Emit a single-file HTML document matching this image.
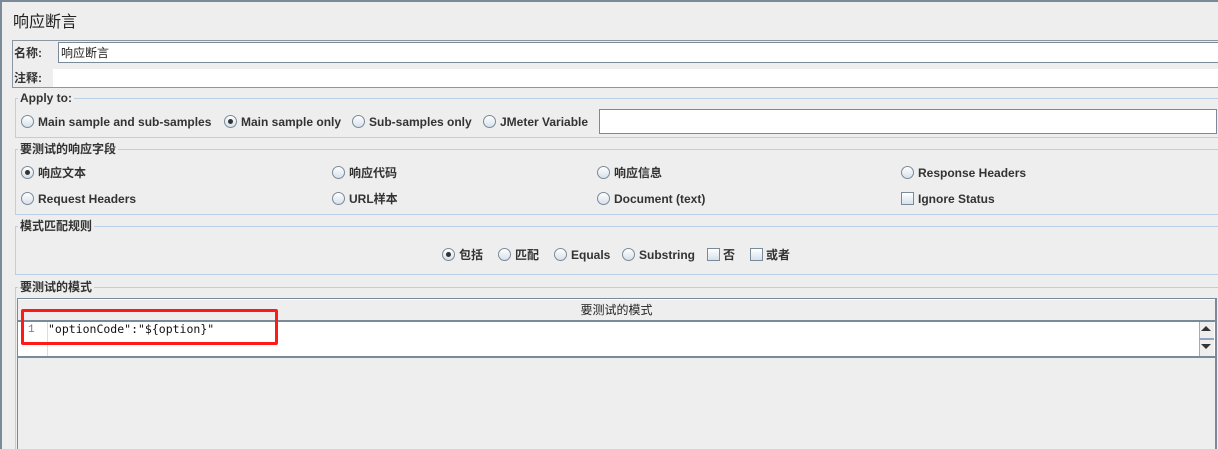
<!DOCTYPE html>
<html><head><meta charset="utf-8"><style>
*{margin:0;padding:0;box-sizing:border-box}
html,body{width:1218px;height:449px;overflow:hidden}
body{background:#eeeeee;position:relative;font-family:"Liberation Sans","Noto Sans CJK SC",sans-serif;font-size:12px;color:#333}
.a{position:absolute;white-space:nowrap}
.fs{position:absolute;border:1px solid #b8cfe5;}
.lg{position:absolute;background:#eeeeee;padding:0 2px;font-weight:bold;font-size:12px;line-height:14px;color:#333}
.r{position:absolute;width:13px;height:13px;border-radius:50%;border:1px solid #7a8a99;background:linear-gradient(#fff,#d6e0ea)}
.r.on::after{content:"";position:absolute;left:3px;top:3px;width:5px;height:5px;border-radius:50%;background:#333}
.c{position:absolute;width:13px;height:13px;border:1px solid #7a8a99;background:linear-gradient(#fff,#d6e0ea)}
.t{position:absolute;font-weight:bold;line-height:14px;color:#333;white-space:nowrap}
</style></head><body>
<div class="a" style="left:0;top:0;width:1218px;height:2px;background:#7a8a99"></div>
<div class="a" style="left:0;top:0;width:2px;height:449px;background:#7a8a99"></div>
<div class="a" style="left:13px;top:13px;font-size:16px;line-height:20px;color:#222">响应断言</div>

<div class="a" style="left:12px;top:40px;width:1210px;height:48px;border:1px solid #8c96a0"></div>
<div class="t" style="left:14px;top:46px">名称:</div>
<div class="a" style="left:58px;top:42px;width:1164px;height:21px;background:#fff;border:1px solid #7a8a99"></div>
<div class="a" style="left:61px;top:46px;line-height:14px;color:#222">响应断言</div>
<div class="t" style="left:14px;top:71px">注释:</div>
<div class="a" style="left:53px;top:69px;width:1170px;height:18px;background:#fff"></div>

<div class="fs" style="left:15px;top:98px;width:1215px;height:40px"></div>
<div class="lg" style="left:18px;top:91px">Apply to:</div>
<div class="r" style="left:21px;top:115px"></div><div class="t" style="left:38px;top:115px">Main sample and sub-samples</div>
<div class="r on" style="left:224px;top:115px"></div><div class="t" style="left:241px;top:115px">Main sample only</div>
<div class="r" style="left:352px;top:115px"></div><div class="t" style="left:369px;top:115px">Sub-samples only</div>
<div class="r" style="left:483px;top:115px"></div><div class="t" style="left:500px;top:115px">JMeter Variable</div>
<div class="a" style="left:599px;top:109px;width:618px;height:25px;background:#fff;border:1px solid #7a8a99"></div>

<div class="fs" style="left:15px;top:149px;width:1215px;height:66px"></div>
<div class="lg" style="left:18px;top:142px">要测试的响应字段</div>
<div class="r on" style="left:21px;top:166px"></div><div class="t" style="left:38px;top:166px">响应文本</div>
<div class="r" style="left:332px;top:166px"></div><div class="t" style="left:349px;top:166px">响应代码</div>
<div class="r" style="left:597px;top:166px"></div><div class="t" style="left:614px;top:166px">响应信息</div>
<div class="r" style="left:901px;top:166px"></div><div class="t" style="left:918px;top:166px">Response Headers</div>
<div class="r" style="left:21px;top:192px"></div><div class="t" style="left:38px;top:192px">Request Headers</div>
<div class="r" style="left:332px;top:192px"></div><div class="t" style="left:349px;top:192px">URL样本</div>
<div class="r" style="left:597px;top:192px"></div><div class="t" style="left:614px;top:192px">Document (text)</div>
<div class="c" style="left:901px;top:192px"></div><div class="t" style="left:918px;top:192px">Ignore Status</div>

<div class="fs" style="left:15px;top:226px;width:1215px;height:49px"></div>
<div class="lg" style="left:18px;top:219px">模式匹配规则</div>
<div class="r on" style="left:442px;top:248px"></div><div class="t" style="left:459px;top:248px">包括</div>
<div class="r" style="left:498px;top:248px"></div><div class="t" style="left:515px;top:248px">匹配</div>
<div class="r" style="left:554px;top:248px"></div><div class="t" style="left:571px;top:248px">Equals</div>
<div class="r" style="left:622px;top:248px"></div><div class="t" style="left:639px;top:248px">Substring</div>
<div class="c" style="left:707px;top:248px"></div><div class="t" style="left:723px;top:248px">否</div>
<div class="c" style="left:750px;top:248px"></div><div class="t" style="left:766px;top:248px">或者</div>

<div class="fs" style="left:15px;top:287px;width:1215px;height:170px"></div>
<div class="lg" style="left:18px;top:280px">要测试的模式</div>
<div class="a" style="left:17px;top:298px;width:1200px;height:160px;border:1px solid #7a8a99;border-right:2px solid #7a8a99"></div>
<div class="a" style="left:18px;top:299px;width:1197px;height:21px;background:#eeeeee;border-top:1px solid #fff"></div>
<div class="a" style="left:18px;top:303px;width:1197px;text-align:center;line-height:14px;color:#222">要测试的模式</div>
<div class="a" style="left:18px;top:320px;width:1197px;height:2px;background:#7a8a99"></div>
<div class="a" style="left:18px;top:322px;width:1197px;height:34px;background:#fff"></div>
<div class="a" style="left:47px;top:322px;width:1px;height:34px;background:#ddd"></div>
<div class="a" style="left:18px;top:356px;width:1197px;height:2px;background:#7a8a99"></div>
<div class="a" style="left:28px;top:323px;font-family:'Liberation Mono',monospace;font-size:11px;line-height:14px;color:#8a6a8a">1</div>
<div class="a" style="left:48px;top:322px;font-family:'DejaVu Sans Mono','Liberation Mono',monospace;font-size:11.5px;line-height:14px;color:#111">"optionCode":"${option}"</div>
<div class="a" style="left:1199px;top:322px;width:15px;height:34px;background:#eee;border-left:1px solid #aaa"></div>
<div class="a" style="left:1201px;top:326px;width:0;height:0;border-left:5px solid transparent;border-right:5px solid transparent;border-bottom:5px solid #333"></div>
<div class="a" style="left:1199px;top:338px;width:15px;height:2px;background:#8fa7c0"></div>
<div class="a" style="left:1201px;top:344px;width:0;height:0;border-left:5px solid transparent;border-right:5px solid transparent;border-top:5px solid #333"></div>
<div class="a" style="left:21px;top:309px;width:257px;height:36px;border:3px solid #ff1a1a;border-radius:2px"></div>
</body></html>
